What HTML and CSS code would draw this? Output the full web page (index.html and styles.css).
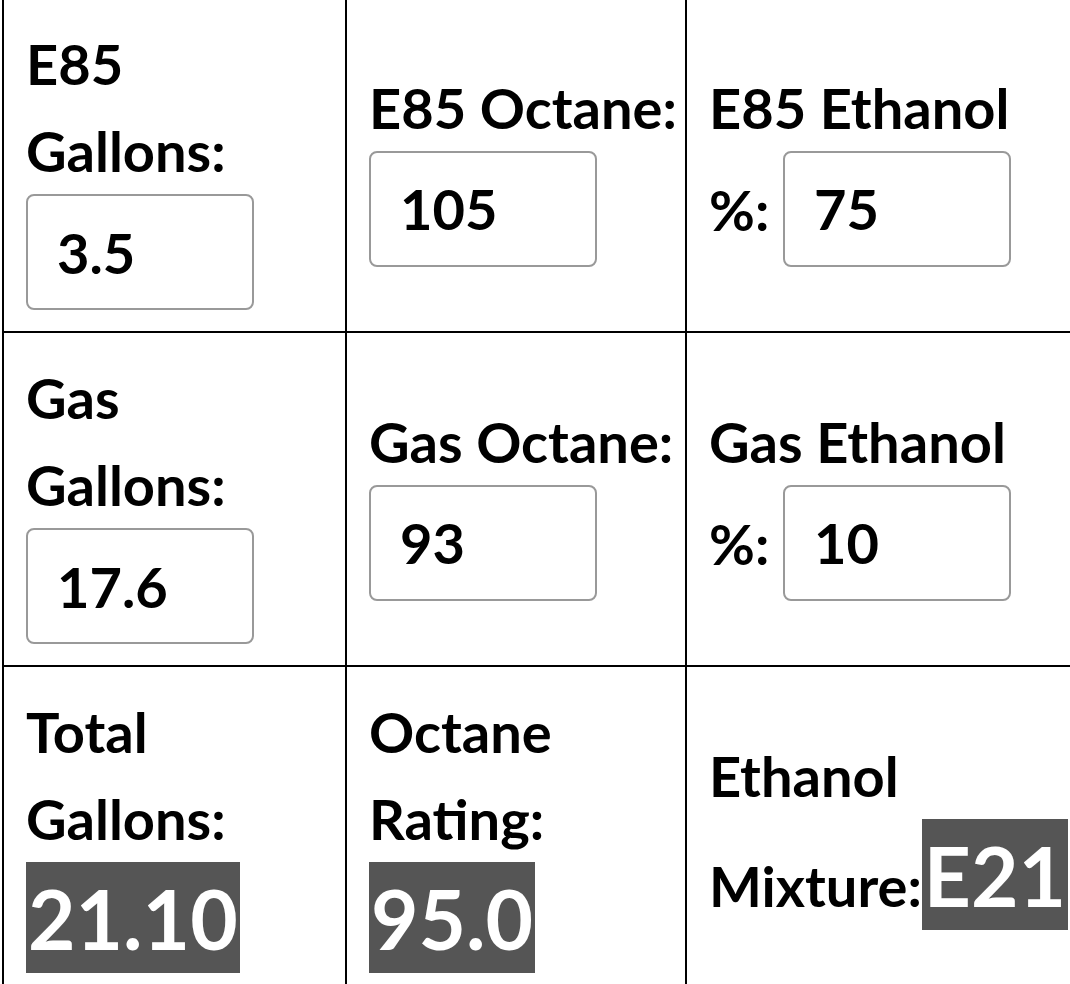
FILE: index.html
```html
<!DOCTYPE html>
<html lang="en">
<head>
<meta charset="UTF-8">
<meta name="viewport" content="width=device-width, initial-scale=1.0">
<title>E85 Mix Calculator</title>
<link rel="stylesheet" href="styles.css">
</head>
<body>

<table class="calc">
	<colgroup>
		<col class="c1">
		<col class="c2">
		<col class="c3">
	</colgroup>
	<tr>
		<td>
			<label for="e85Gal">E85<br>Gallons:</label>
			<input id="e85Gal" type="text" value="3.5">
		</td>
		<td>
			<label for="e85Oct">E85 Octane:</label>
			<input id="e85Oct" type="text" value="105">
		</td>
		<td>
			<label for="e85Eth">E85 Ethanol<br>%:</label>
			<input id="e85Eth" type="text" value="75">
		</td>
	</tr>
	<tr>
		<td>
			<label for="gasGal">Gas<br>Gallons:</label>
			<input id="gasGal" type="text" value="17.6">
		</td>
		<td>
			<label for="gasOct">Gas Octane:</label>
			<input id="gasOct" type="text" value="93">
		</td>
		<td>
			<label for="gasEth">Gas Ethanol<br>%:</label>
			<input id="gasEth" type="text" value="10">
		</td>
	</tr>
	<tr>
		<td>
			<span class="lbl">Total<br>Gallons:</span>
			<span class="result" id="totalGal">21.10</span>
		</td>
		<td>
			<span class="lbl">Octane<br>Rating:</span>
			<span class="result" id="octRating">95.0</span>
		</td>
		<td>
			<span class="lbl">Ethanol<br><span class="keep">Mixture:<span class="result" id="ethMix">E21</span></span></span>
		</td>
	</tr>
</table>

<script>
var ids = ['e85Gal', 'e85Oct', 'e85Eth', 'gasGal', 'gasOct', 'gasEth'];

function calc() {
    var v = {};
    for (var i = 0; i < ids.length; i++) {
        v[ids[i]] = parseFloat(document.getElementById(ids[i]).value) || 0;
    }
    var total = v.e85Gal + v.gasGal;
    if (!total) return;
    var oct = (v.e85Gal * v.e85Oct + v.gasGal * v.gasOct) / total;
    var eth = (v.e85Gal * v.e85Eth + v.gasGal * v.gasEth) / total;
    document.getElementById('totalGal').innerHTML = total.toFixed(2);
    document.getElementById('octRating').innerHTML = oct.toFixed(1);
    document.getElementById('ethMix').innerHTML = 'E' + Math.round(eth);
}

for (var i = 0; i < ids.length; i++) {
    document.getElementById(ids[i]).oninput = calc;
}
</script>
</body>
</html>
```

FILE: styles.css
```css
* {
	margin: 0;
	padding: 0;
}
html, body {
	overflow: hidden;
}
body {
	background: #fff;
	color: #000;
	font: bold 56px/87px Lato, "Open Sans", sans-serif;
}
.calc {
	width: 1100px;
	margin: -3px 0 0 2px;
	border-collapse: collapse;
	table-layout: fixed;
}
.calc col.c1 {
	width: 343px;
}
.calc col.c2 {
	width: 340px;
}
.calc td {
	border: 2px solid #000;
	padding: 21px 22px;
	vertical-align: middle;
}
.calc label,
.calc .lbl,
.calc .keep {
	white-space: nowrap;
}
.calc input {
	width: 228px;
	height: 116px;
	box-sizing: border-box;
	padding-left: 29px;
	border: 2px solid #999;
	border-radius: 8px;
	font: inherit;
	color: #000;
	background: #fff;
	outline: none;
	vertical-align: baseline;
}
.calc .result {
	display: inline-block;
	padding: 7px 2px 6px;
	background: #555;
	color: #fff;
	font-size: 82px;
	line-height: normal;
}
```
